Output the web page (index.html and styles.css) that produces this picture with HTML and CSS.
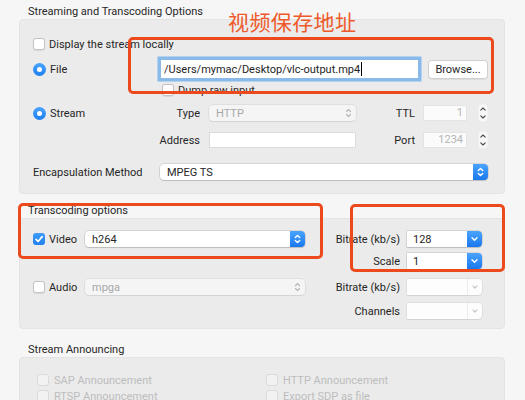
FILE: index.html
```html
<!DOCTYPE html>
<html>
<head>
<meta charset="utf-8">
<link rel="stylesheet" href="styles.css">
</head>
<body>
<div class="page">
  <section class="group g1">
    <div class="group-title">Streaming and Transcoding Options</div>
    <div class="box box1">
      <div class="row r-display">
        <span class="check"></span><span class="lbl">Display the stream locally</span>
      </div>
      <div class="row r-file">
        <div class="lead"><span class="radio"></span><span class="lbl">File</span></div>
        <div class="field focus"><span>/Users/mymac/Desktop/vlc-output.mp4</span><span class="caret"></span></div>
        <div class="button">Browse...</div>
      </div>
      <div class="row r-dump">
        <span class="check"></span><span class="lbl">Dump raw input</span>
      </div>
      <div class="row r-net">
        <div class="lead"><span class="radio"></span><span class="lbl">Stream</span></div>
        <span class="flabel fl-left">Type</span>
        <div class="popup disabled w-net"><span class="ptext">HTTP</span>
          <svg class="updown" width="15" height="16" viewBox="0 0 15 16"><path d="M5.5 6.5L7.5 4.5 9.5 6.5M5.5 9.5L7.5 11.5 9.5 9.5" fill="none" stroke="#b8b8b8" stroke-width="1.2" stroke-linecap="round" stroke-linejoin="round"/></svg>
        </div>
        <span class="flabel fl-right">TTL</span>
        <div class="field num">1</div>
        <svg class="stepper" width="10" height="18" viewBox="0 0 10 18"><rect x="0.5" y="0.5" width="9" height="17" rx="4" fill="#f7f7f7"/><path d="M2.8 6.2L5 4 7.2 6.2M2.8 11.8L5 14 7.2 11.8" fill="none" stroke="#4a4a4a" stroke-width="1.1" stroke-linecap="round" stroke-linejoin="round"/></svg>
      </div>
      <div class="row r-addr">
        <div class="lead"></div>
        <span class="flabel fl-left">Address</span>
        <div class="field w-net"></div>
        <span class="flabel fl-right">Port</span>
        <div class="field num">1234</div>
        <svg class="stepper" width="10" height="18" viewBox="0 0 10 18"><rect x="0.5" y="0.5" width="9" height="17" rx="4" fill="#f7f7f7"/><path d="M2.8 6.2L5 4 7.2 6.2M2.8 11.8L5 14 7.2 11.8" fill="none" stroke="#4a4a4a" stroke-width="1.1" stroke-linecap="round" stroke-linejoin="round"/></svg>
      </div>
      <div class="row r-encap">
        <span class="encap-label">Encapsulation Method</span>
        <div class="popup w-encap"><span class="ptext">MPEG TS</span>
          <span class="bluebox"><svg width="15" height="16" viewBox="0 0 15 16"><path d="M5.3 6.6L7.5 4.4 9.7 6.6M5.3 9.4L7.5 11.6 9.7 9.4" fill="none" stroke="#fff" stroke-width="1.4" stroke-linecap="round" stroke-linejoin="round"/></svg></span>
        </div>
      </div>
    </div>
  </section>

  <section class="group g2">
    <div class="group-title">Transcoding options</div>
    <div class="box box2">
      <div class="cell opt"><span class="check checked"><svg width="12" height="12" viewBox="0 0 12 12"><path d="M3 6.3L5.1 8.5 9.2 3.6" fill="none" stroke="#fff" stroke-width="1.7" stroke-linecap="round" stroke-linejoin="round"/></svg></span><span class="lbl">Video</span></div>
      <div class="cell"><div class="popup w-codec"><span class="ptext">h264</span>
        <span class="bluebox"><svg width="15" height="16" viewBox="0 0 15 16"><path d="M5.3 6.6L7.5 4.4 9.7 6.6M5.3 9.4L7.5 11.6 9.7 9.4" fill="none" stroke="#fff" stroke-width="1.4" stroke-linecap="round" stroke-linejoin="round"/></svg></span>
      </div></div>
      <div class="cell rlabel">Bitrate (kb/s)</div>
      <div class="cell"><div class="combo"><span class="ptext">128</span>
        <span class="bluebox"><svg width="15" height="16" viewBox="0 0 15 16"><path d="M5 6.8L7.5 9.3 10 6.8" fill="none" stroke="#fff" stroke-width="1.4" stroke-linecap="round" stroke-linejoin="round"/></svg></span>
      </div></div>

      <div class="cell"></div>
      <div class="cell"></div>
      <div class="cell rlabel">Scale</div>
      <div class="cell"><div class="combo"><span class="ptext">1</span>
        <span class="bluebox"><svg width="15" height="16" viewBox="0 0 15 16"><path d="M5 6.8L7.5 9.3 10 6.8" fill="none" stroke="#fff" stroke-width="1.4" stroke-linecap="round" stroke-linejoin="round"/></svg></span>
      </div></div>

      <div class="cell opt"><span class="check"></span><span class="lbl">Audio</span></div>
      <div class="cell"><div class="popup disabled w-codec"><span class="ptext">mpga</span>
        <svg class="updown" width="15" height="16" viewBox="0 0 15 16"><path d="M5.5 6.5L7.5 4.5 9.5 6.5M5.5 9.5L7.5 11.5 9.5 9.5" fill="none" stroke="#b8b8b8" stroke-width="1.2" stroke-linecap="round" stroke-linejoin="round"/></svg>
      </div></div>
      <div class="cell rlabel">Bitrate (kb/s)</div>
      <div class="cell"><div class="combo disabled"><span class="ptext"></span>
        <span class="greybox"><svg width="15" height="16" viewBox="0 0 15 16"><path d="M5.3 6.9L7.5 9.1 9.7 6.9" fill="none" stroke="#c4c4c4" stroke-width="1.2" stroke-linecap="round" stroke-linejoin="round"/></svg></span>
      </div></div>

      <div class="cell"></div>
      <div class="cell"></div>
      <div class="cell rlabel">Channels</div>
      <div class="cell"><div class="combo disabled"><span class="ptext"></span>
        <span class="greybox"><svg width="15" height="16" viewBox="0 0 15 16"><path d="M5.3 6.9L7.5 9.1 9.7 6.9" fill="none" stroke="#c4c4c4" stroke-width="1.2" stroke-linecap="round" stroke-linejoin="round"/></svg></span>
      </div></div>
    </div>
  </section>

  <section class="group g3">
    <div class="group-title">Stream Announcing</div>
    <div class="box box3">
      <div class="opt dim"><span class="check off"></span><span class="lbl">SAP Announcement</span></div>
      <div class="opt dim"><span class="check off"></span><span class="lbl">HTTP Announcement</span></div>
      <div class="opt dim"><span class="check off"></span><span class="lbl">RTSP Announcement</span></div>
      <div class="opt dim"><span class="check off"></span><span class="lbl">Export SDP as file</span></div>
    </div>
  </section>

  <div class="note">视频保存地址</div>
  <div class="mark mark-file"></div>
  <div class="mark mark-video"></div>
  <div class="mark mark-rate"></div>
</div>
</body>
</html>
```
FILE: styles.css
```css
* { box-sizing: border-box; }
html, body { margin: 0; padding: 0; }
body {
  background: #f6f6f6;
  font-family: Roboto, "Liberation Sans", Arial, sans-serif;
  font-size: 11px;
  color: #262626;
  width: 525px;
  height: 400px;
  overflow: hidden;
}
.page {
  position: relative;
  width: 525px;
  height: 400px;
  padding: 5px 20px 0 19px;
}
.group-title {
  height: 14px;
  line-height: 14px;
  padding-left: 9px;
  white-space: nowrap;
}
.box {
  width: 486px;
  background: #ebebeb;
  border: 1px solid #e4e4e4;
  border-radius: 4px;
}
.g2 { margin-top: 10px; }
.g3 { margin-top: 14px; }

/* ---------- box 1 ---------- */
.box1 { padding: 12px 0 11px 13px; }
.row { display: flex; align-items: center; white-space: nowrap; }
.r-display { height: 24px; }
.r-file { height: 24px; margin-top: 1px; }
.r-dump { height: 16px; margin-top: 1px; padding-left: 129px; }
.r-net { height: 20px; margin-top: 5px; }
.r-addr { height: 20px; margin-top: 7px; }
.r-encap { height: 20px; margin-top: 12px; }
.lead { width: 120px; display: flex; align-items: center; }
.r-file .lead { width: 125px; }
.lbl { margin-left: 4px; }
.flabel { text-align: right; }
.fl-left { width: 47px; margin-right: 9px; }
.fl-right { width: 59px; margin-right: 8px; }
.encap-label { width: 127px; }

/* ---------- controls ---------- */
.check {
  width: 12px; height: 12px; flex: none;
  background: #fff;
  border-radius: 3px;
  box-shadow: inset 0 0 0 1px #c3c3c3, 0 0.5px 1px rgba(0,0,0,0.08);
  display: inline-flex;
}
.check.checked { background: linear-gradient(#3d9cfb, #1f80f0); box-shadow: none; }
.check.off { background: #f2f2f2; box-shadow: inset 0 0 0 1px #dadada; }
.radio {
  width: 13px; height: 13px; flex: none;
  border-radius: 50%;
  background: linear-gradient(#4aa5fc, #1c7ef0);
  display: inline-flex; align-items: center; justify-content: center;
}
.radio::after {
  content: ""; width: 5px; height: 5px; border-radius: 50%; background: #fff;
}
.field {
  height: 16px;
  background: #fff;
  box-shadow: inset 0 0 0 1px #dcdcdc;
}
.field.focus {
  width: 259px; height: 20px; margin: 0 2px;
  padding-left: 4px;
  display: flex; align-items: center;
  box-shadow: inset 0 0 0 1px #8fb9e6, 0 0 0 2.5px #86b9ec;
  color: #1e1e1e;
  font-size: 11px;
}
.caret { width: 1px; height: 14px; background: #000; margin-left: 1px; }
.field.num {
  width: 44px;
  text-align: right; padding-right: 4px;
  line-height: 16px;
  color: #b5b5b5;
  background: #fbfbfb;
  box-shadow: inset 0 0 0 1px #e4e4e4;
  margin-right: 11px;
}
.w-net { width: 147px; }
.button {
  width: 60px; height: 19px; margin-left: 7px;
  background: #fff;
  border-radius: 4px;
  box-shadow: inset 0 0 0 1px #cfcfcf, 0 0.5px 0.5px rgba(0,0,0,0.12);
  display: flex; align-items: center; justify-content: center;
}
.stepper { display: block; flex: none; }
.popup, .combo {
  height: 16px;
  display: flex; align-items: center;
  background: #fff;
  border-radius: 4px;
  box-shadow: 0 0 0 0.5px rgba(0,0,0,0.18), 0 1px 1px rgba(0,0,0,0.12);
}
.popup .ptext { flex: 1; padding-left: 7px; }
.combo { border-radius: 0 4px 4px 0; }
.combo .ptext { flex: 1; padding-left: 6px; }
.popup.disabled { background: #f5f5f5; color: #a8a8a8; box-shadow: 0 0 0 0.5px rgba(0,0,0,0.1), 0 1px 1px rgba(0,0,0,0.05); }
.w-encap { width: 328px; }
.w-codec { width: 220px; }
.bluebox {
  width: 15px; height: 16px; flex: none;
  background: linear-gradient(#4aa4fc, #1a78ee);
  border-radius: 0 4px 4px 0;
  display: flex;
}
.greybox {
  width: 15px; height: 16px; flex: none;
  border-left: 1px solid #ececec;
  display: flex;
}
.updown { display: block; flex: none; }
.combo { width: 75px; }
.combo.disabled { background: #fdfdfd; box-shadow: 0 0 0 0.5px rgba(0,0,0,0.1), 0 1px 1px rgba(0,0,0,0.05); }

/* ---------- box 2 ---------- */
.box2 {
  display: grid;
  grid-template-columns: 52px 220px 102px 75px;
  grid-template-rows: 22px 26px 24px 20px;
  align-items: start;
  padding: 10px 0 7px 13px;
}
.cell { height: 20px; display: flex; align-items: center; white-space: nowrap; }
.rlabel { justify-content: flex-end; padding-right: 7px; }
.opt { display: flex; align-items: center; white-space: nowrap; }

/* ---------- box 3 ---------- */
.box3 {
  display: grid;
  grid-template-columns: 229px 1fr;
  grid-template-rows: 16px 16px;
  padding: 14px 0 12px 17px;
}
.dim { color: #bdbdbd; }
.dim .lbl { margin-left: 5px; }

/* ---------- annotations (overlay) ---------- */
.note {
  position: absolute;
  left: 228px; top: 8px;
  font-family: "Noto Sans CJK SC", sans-serif;
  font-size: 21px;
  line-height: 26px;
  letter-spacing: 0.4px;
  color: #ee5a2a;
}
.mark {
  position: absolute;
  border: 3px solid #ec4a1c;
  border-radius: 5px;
}
.mark-file { left: 128px; top: 37px; width: 366px; height: 57px; }
.mark-video { left: 18px; top: 203px; width: 305px; height: 56px; }
.mark-rate { left: 350px; top: 204px; width: 155px; height: 68px; }
```
